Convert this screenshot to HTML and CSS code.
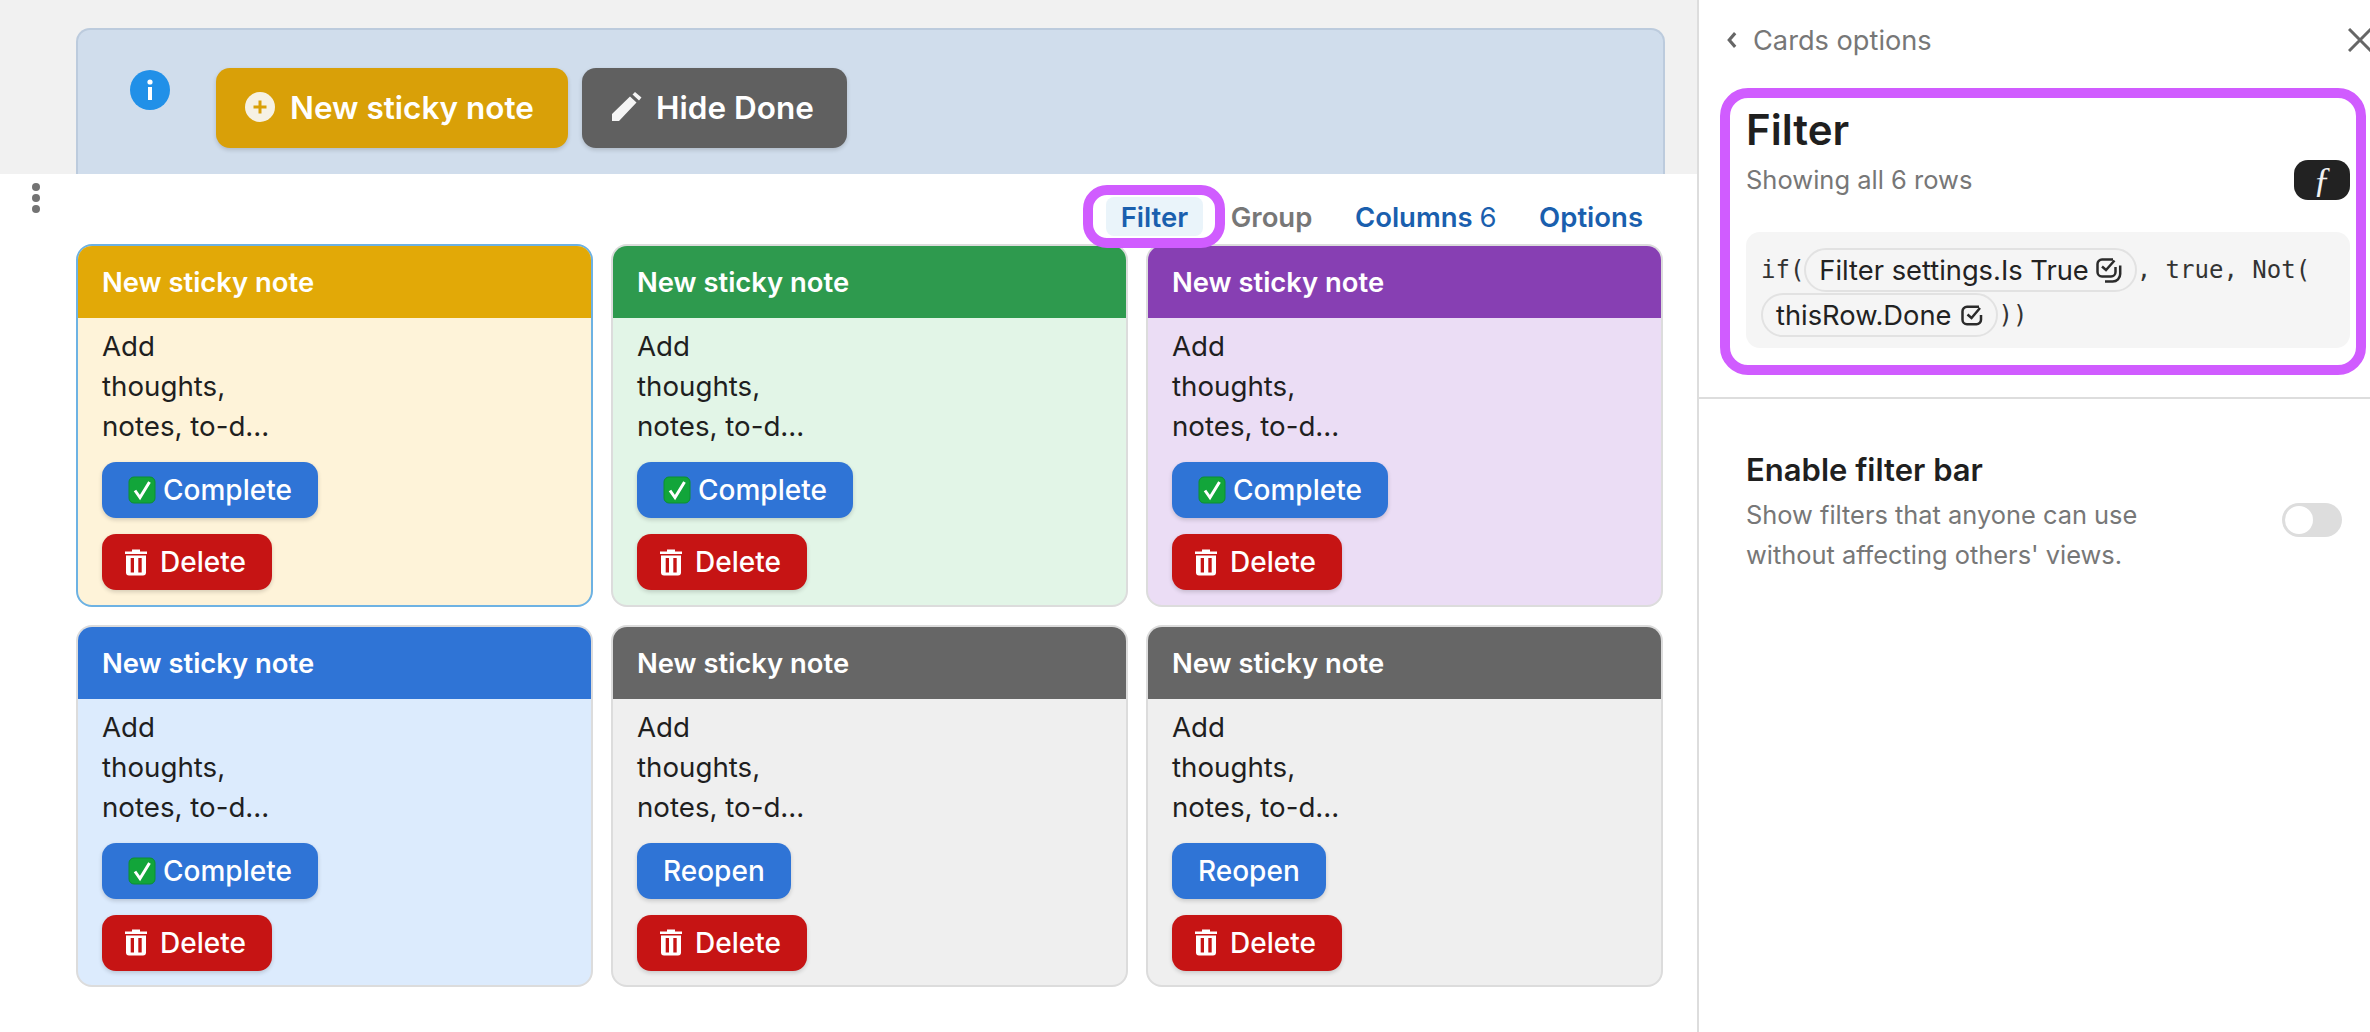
FILE: index.html
```html
<!DOCTYPE html>
<html lang="en">
<head>
<meta charset="utf-8">
<title>Cards options</title>
<link rel="stylesheet" href="styles.css">
</head>
<body>
<svg class="defs" width="0" height="0" aria-hidden="true">
  <symbol id="ok" viewBox="0 0 28 28">
    <rect x="1" y="1" width="26" height="26" rx="5" fill="#12a53a" stroke="#0c8f30" stroke-width="1"/>
    <path d="M7 14.500l5 7L21.500 6" fill="none" stroke="#fff" stroke-width="3"/>
  </symbol>
  <symbol id="trash" viewBox="0 0 22 27">
    <path d="M7 .5h8v2.500H7zM0 2.500h22V5H0z" fill="#fff"/>
    <path fill-rule="evenodd" d="M1 6.500h20v17a3 3 0 0 1-3 3H4a3 3 0 0 1-3-3zM5.700 9v14.500H9V9zM13.300 9v14.500h3.400V9z" fill="#fff"/>
  </symbol>
  <symbol id="chk" viewBox="0 0 22 21">
    <path d="M18 1.800H6a4.500 4.500 0 0 0-4.500 4.500v8.500A4.500 4.500 0 0 0 6 19.300h9.500a4.500 4.500 0 0 0 4.500-4.500V10" fill="none" stroke="#2b2b2b" stroke-width="2.500"/>
    <path d="M6.500 9.500l4 3.500 8.500-10" fill="none" stroke="#2b2b2b" stroke-width="2.500"/>
  </symbol>
  <symbol id="chks" viewBox="0 0 26 26">
    <path d="M17 1.500H6A4.500 4.500 0 0 0 1.500 6v8A4.500 4.500 0 0 0 6 18.500h9a4.500 4.500 0 0 0 4.500-4.500V9" fill="none" stroke="#2b2b2b" stroke-width="2.500"/>
    <path d="M6 8.500l4 3.500 8.500-9.500" fill="none" stroke="#2b2b2b" stroke-width="2.500"/>
    <path d="M24.200 7.500V16a7.500 7.500 0 0 1-7.500 7.500H9" fill="none" stroke="#2b2b2b" stroke-width="2.500"/>
  </symbol>
</svg>

<main class="main">
  <div class="band">
    <div class="banner">
      <svg class="info" viewBox="0 0 40 40" aria-hidden="true">
        <circle cx="20" cy="20" r="20" fill="#2190e8"/>
        <circle cx="20" cy="12" r="2.600" fill="#fff"/>
        <rect x="18" y="17" width="4" height="13" fill="#fff"/>
      </svg>
      <button class="big big-yellow">
        <svg class="big-ico" viewBox="0 0 30 30" aria-hidden="true">
          <circle cx="15" cy="15" r="15" fill="#f6f1e4"/>
          <path d="M13.500 8.500h3v5h5v3h-5v5h-3v-5h-5v-3h5z" fill="#d9a008"/>
        </svg>
        New sticky note
      </button>
      <button class="big big-gray">
        <svg class="big-ico" viewBox="0 0 30 30" aria-hidden="true">
          <path d="M0 29v-7L18 4.500 24.500 10.500 7 29zM20.500 2.500L23 0l6.500 5.500L27 8.500z" fill="#f4f4f4"/>
        </svg>
        Hide Done
      </button>
    </div>
  </div>

  <div class="sheet">
    <div class="kebab"><i></i><i></i><i></i></div>
    <nav class="tools">
      <span class="tool tool-filter">Filter</span>
      <span class="tool tool-muted">Group</span>
      <span class="tool">Columns <em>6</em></span>
      <span class="tool">Options</span>
    </nav>

    <section class="grid">
      <article class="card yellow selected">
        <h3>New sticky note</h3>
        <div class="body">
          <p>Add<br>thoughts,<br>notes, to-d...</p>
          <button class="act blue act-complete"><svg class="ok"><use href="#ok"/></svg>Complete</button>
          <button class="act red"><svg class="trash"><use href="#trash"/></svg>Delete</button>
        </div>
      </article>
      <article class="card green">
        <h3>New sticky note</h3>
        <div class="body">
          <p>Add<br>thoughts,<br>notes, to-d...</p>
          <button class="act blue act-complete"><svg class="ok"><use href="#ok"/></svg>Complete</button>
          <button class="act red"><svg class="trash"><use href="#trash"/></svg>Delete</button>
        </div>
      </article>
      <article class="card purple">
        <h3>New sticky note</h3>
        <div class="body">
          <p>Add<br>thoughts,<br>notes, to-d...</p>
          <button class="act blue act-complete"><svg class="ok"><use href="#ok"/></svg>Complete</button>
          <button class="act red"><svg class="trash"><use href="#trash"/></svg>Delete</button>
        </div>
      </article>
      <article class="card sky">
        <h3>New sticky note</h3>
        <div class="body">
          <p>Add<br>thoughts,<br>notes, to-d...</p>
          <button class="act blue act-complete"><svg class="ok"><use href="#ok"/></svg>Complete</button>
          <button class="act red"><svg class="trash"><use href="#trash"/></svg>Delete</button>
        </div>
      </article>
      <article class="card gray">
        <h3>New sticky note</h3>
        <div class="body">
          <p>Add<br>thoughts,<br>notes, to-d...</p>
          <button class="act blue">Reopen</button>
          <button class="act red"><svg class="trash"><use href="#trash"/></svg>Delete</button>
        </div>
      </article>
      <article class="card gray">
        <h3>New sticky note</h3>
        <div class="body">
          <p>Add<br>thoughts,<br>notes, to-d...</p>
          <button class="act blue">Reopen</button>
          <button class="act red"><svg class="trash"><use href="#trash"/></svg>Delete</button>
        </div>
      </article>
    </section>
  </div>
</main>

<aside class="panel">
  <header class="panel-head">
    <svg class="chev" viewBox="0 0 12 20" aria-hidden="true"><path d="M10 2.500L3.500 10l6.500 7.500" fill="none" stroke="#666" stroke-width="3.400"/></svg>
    <span class="crumb">Cards options</span>
    <svg class="close" viewBox="0 0 24 24" aria-hidden="true"><path d="M1 1l22 22M23 1L1 23" fill="none" stroke="#666" stroke-width="3"/></svg>
  </header>

  <section class="ring">
    <h2>Filter</h2>
    <div class="status">
      <span>Showing all 6 rows</span>
      <span class="fx">ƒ</span>
    </div>
    <div class="formula">if(<span class="pill">Filter settings.Is True<svg class="chks"><use href="#chks"/></svg></span>, true, Not(<span class="pill">thisRow.Done<svg class="chk"><use href="#chk"/></svg></span>))</div>
  </section>

  <section class="option">
    <div class="option-text">
      <h4>Enable filter bar</h4>
      <p>Show filters that anyone can use<br>without affecting others' views.</p>
    </div>
    <span class="toggle"></span>
  </section>
</aside>
</body>
</html>
```
FILE: styles.css
```css
* { box-sizing: border-box; }
html, body { margin: 0; height: 100%; }
body {
  display: flex;
  height: 1032px;
  overflow: hidden;
  background: #fff;
  color: #1f1f1f;
  font-family: Inter, "Noto Sans", sans-serif;
}
button { font-family: inherit; border: 0; color: #fff; }
.defs { position: absolute; }

.main { width: 1697px; flex: none; display: flex; flex-direction: column; }

.band { height: 174px; padding: 28px 32px 0 76px; background: #f1f1f1; }
.banner {
  height: 146px;
  display: flex;
  align-items: flex-start;
  padding: 38px 0 0 52px;
  background: #d0ddec;
  border: 2px solid #bccbdd;
  border-bottom: 0;
  border-radius: 14px 14px 0 0;
}
.info { width: 40px; height: 40px; margin: 2px 46px 0 0; }
.big {
  height: 80px;
  display: flex;
  align-items: center;
  font-size: 31.500px;
  font-weight: 600;
  border-radius: 14px;
  box-shadow: 0 2px 4px rgba(0, 0, 0, .16);
}
.big-yellow { width: 352px; padding: 0 0 2px 29px; gap: 15px; background: #d9a008; margin-right: 14px; }
.big-gray { width: 265px; padding: 0 0 2px 30px; gap: 14px; background: #606060; }
.big-ico { width: 30px; height: 30px; flex: none; }

.sheet { position: relative; flex: 1; padding: 0 34px 0 76px; }
.kebab { position: absolute; left: 32px; top: 9px; display: flex; flex-direction: column; gap: 3px; }
.kebab i { width: 8px; height: 8px; border-radius: 50%; background: #737373; }

.tools {
  height: 70px;
  display: flex;
  justify-content: flex-end;
  align-items: flex-start;
  gap: 12.500px;
  padding: 23px 5px 0 0;
  font-size: 27.500px;
  font-weight: 600;
  color: #1a5fae;
}
.tool { height: 39px; line-height: 41px; padding: 0 15px; border-radius: 8px; }
.tool em { font-style: normal; font-weight: 400; }
.tool-muted { color: #777; }
.tool-filter { position: relative; background: #eaf4fa; }
.tool-filter::after {
  content: "";
  position: absolute;
  left: -23px;
  right: -22px;
  top: -12px;
  bottom: -12px;
  border: 10px solid #d05cff;
  border-radius: 24px;
}

.grid { display: grid; grid-template-columns: repeat(3, 1fr); grid-auto-rows: 362.500px; gap: 18px; }
.card { display: flex; flex-direction: column; border: 2px solid #dcdcdc; border-radius: 16px; overflow: hidden; }
.card h3 {
  height: 72px;
  margin: 0;
  padding: 0 24px;
  line-height: 72px;
  color: #fff;
  font-size: 27.400px;
  font-weight: 600;
}
.body { flex: 1; display: flex; flex-direction: column; align-items: flex-start; gap: 16px; padding: 8px 24px 0; }
.body p { margin: 0; font-size: 27.700px; line-height: 40px; }
.yellow { background: #fef3d9; }
.yellow h3 { background: #e2a907; }
.selected { border-color: #6db2e3; }
.green { background: #e2f5e7; }
.green h3 { background: #2e9a4e; }
.purple { background: #ebddf5; }
.purple h3 { background: #873fb3; }
.sky { background: #dcebfd; }
.sky h3 { background: #2f74d6; }
.gray { background: #efefef; }
.gray h3 { background: #666; }

.act {
  height: 56px;
  display: flex;
  align-items: center;
  padding: 0 26px;
  font-size: 28px;
  font-weight: 500;
  border-radius: 14px;
  box-shadow: 0 2px 4px rgba(0, 0, 0, .16);
}
.blue { background: #2f74d6; }
.red { background: #c61414; gap: 13px; padding: 0 26px 0 23px; }
.act-complete { gap: 7px; }
.ok { width: 28px; height: 28px; flex: none; }
.trash { width: 22px; height: 27px; flex: none; }

.panel {
  position: relative;
  flex: 1;
  min-width: 0;
  overflow: hidden;
  border-left: 2px solid #ddd;
}
.panel-head { height: 88px; display: flex; align-items: center; padding: 0 0 8px 27px; }
.chev { width: 11px; height: 20px; margin-right: 16px; }
.crumb { flex: 1; font-size: 27.200px; color: #777; }
.close { width: 24px; height: 24px; margin-right: -2px; }

.ring {
  margin: 0 4px 0 21px;
  height: 287px;
  padding: 7px 6px 0 16px;
  border: 10px solid #d05cff;
  border-radius: 28px;
}
.ring h2 { margin: 0; font-size: 42px; line-height: 50px; font-weight: 600; }
.status {
  display: flex;
  justify-content: space-between;
  align-items: center;
  margin-top: 5px;
  font-size: 25.500px;
  color: #777;
}
.status span:first-child { margin-bottom: 2px; }
.fx {
  width: 56px;
  height: 40px;
  border-radius: 14px;
  background: #222;
  color: #f2f2f2;
  text-align: center;
  font: italic 36px/40px "Liberation Serif", serif;
}
.formula {
  height: 116px;
  margin-top: 32px;
  padding: 16px 15px 0;
  border-radius: 14px;
  background: #f5f5f5;
  font-family: "DejaVu Sans Mono", monospace;
  font-size: 24px;
  line-height: 45px;
  color: #333;
}
.pill {
  display: inline-flex;
  align-items: center;
  height: 44px;
  padding: 0 13px;
  vertical-align: top;
  white-space: nowrap;
  border: 2px solid #e2e2e2;
  border-radius: 22px;
  font-family: Inter, sans-serif;
  font-size: 27.300px;
  color: #222;
}
.chks { width: 26px; height: 26px; margin-left: 7px; margin-top: 2px; }
.chk { width: 22px; height: 21px; margin-left: 10px; margin-top: 1px; }

.option {
  display: flex;
  align-items: flex-start;
  margin-top: 22px;
  padding: 53px 28px 0 47px;
  border-top: 2px solid #ddd;
}
.option-text { flex: 1; }
.option h4 { margin: 0; font-size: 31px; line-height: 36px; font-weight: 600; }
.option p { margin: 7px 0 0; font-size: 25.400px; line-height: 40px; color: #777; }
.toggle {
  width: 60px;
  height: 34px;
  margin-top: 51px;
  padding: 3px;
  border-radius: 17px;
  background: #ddd;
}
.toggle::before {
  content: "";
  display: block;
  width: 28px;
  height: 28px;
  border-radius: 50%;
  background: #fff;
}
```
